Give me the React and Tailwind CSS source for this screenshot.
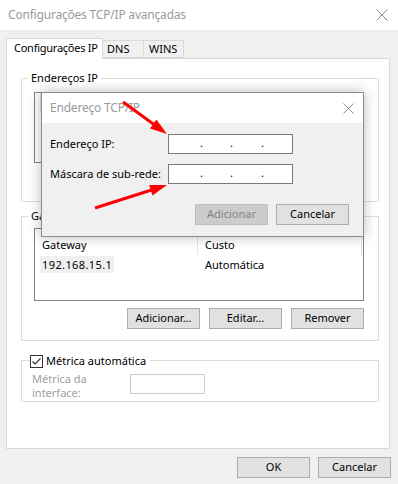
import React from "react";

const F = { fontFamily: '"Noto Sans", "Liberation Sans", sans-serif' };

function Btn({ children, className = "", disabled = false }) {
  return (
    <div
      className={
        "flex items-center justify-center h-[21px] w-[73px] border text-[11px] whitespace-nowrap " +
        (disabled
          ? "bg-[#cccccc] border-[#bfbfbf] text-[#838383] "
          : "bg-[#e1e1e1] border-[#adadad] text-black ") +
        className
      }
    >
      {children}
    </div>
  );
}

function IpBox() {
  return (
    <div className="relative shrink-0 w-[125px] h-[20px] border border-[#7a7a7a] bg-white">
      <span className="absolute left-[31px] top-[1px] text-[11px] leading-[14px]">.</span>
      <span className="absolute left-[61px] top-[1px] text-[11px] leading-[14px]">.</span>
      <span className="absolute left-[92px] top-[1px] text-[11px] leading-[14px]">.</span>
    </div>
  );
}

export default function App() {
  return (
    <div style={F} className="relative w-[398px] h-[484px] bg-[#f0f0f0] text-black text-[11px] whitespace-nowrap overflow-hidden">
      {/* title bar */}
      <div className="h-[30px] bg-white flex items-center justify-between pl-[8px] pr-[10px]">
        <span className="text-[12px] tracking-[-0.2px] text-[#9a9a9a]">Configurações TCP/IP avançadas</span>
        <svg width="12" height="12" viewBox="0 0 12 12">
          <path d="M0.5 0.5 L11.5 11.5 M11.5 0.5 L0.5 11.5" stroke="#8a8a8a" strokeWidth="1" />
        </svg>
      </div>

      {/* tabs */}
      <div className="flex items-end pl-[6px] pt-[7px] h-[28px]">
        <div className="relative z-10 h-[21px] w-[97px] bg-white border border-b-0 border-[#d9d9d9] flex items-center pl-[7px] pb-[2px] -mb-[1px] tracking-[-0.25px]">
          Configurações IP
        </div>
        <div className="h-[18px] w-[41px] bg-[#f0f0f0] border border-l-0 border-[#d9d9d9] pl-[4px] flex items-center">DNS</div>
        <div className="h-[18px] w-[40px] bg-[#f0f0f0] border border-l-0 border-[#d9d9d9] pl-[5px] flex items-center">WINS</div>
      </div>

      {/* panel */}
      <div className="ml-[6px] w-[384px] h-[391px] bg-white border border-[#d9d9d9] pt-[19px] pl-[14px]">
        {/* group 1 */}
        <div className="relative w-[358px] h-[124px] border border-[#dcdcdc] pt-[13px] pl-[12px]">
          <span className="absolute left-[6px] -top-[9px] bg-white px-[3px] leading-[16px]">Endereços IP</span>
          <div className="w-[330px] h-[71px] border border-[#828282] bg-white flex">
            <div className="w-[6px] h-[18px] border-r border-[#e5e5e5]"></div>
          </div>
          <div className="flex justify-end gap-[9px] w-[330px] mt-[7px]">
            <Btn>Adicionar...</Btn>
            <Btn>Editar...</Btn>
            <Btn>Remover</Btn>
          </div>
        </div>

        {/* group 2 */}
        <div className="relative mt-[14px] w-[358px] h-[125px] border border-[#dcdcdc] pt-[11px] pl-[12px]">
          <span className="absolute left-[6px] -top-[9px] bg-white px-[3px] leading-[16px]">Gateways padrão:</span>
          <div className="w-[330px] h-[73px] border border-[#828282] bg-white">
            <div className="flex h-[27px] items-end pb-[1px]">
              <div className="w-[163px] pl-[7px] h-[18px] border-r border-[#e5e5e5] leading-[16px]">Gateway</div>
              <div className="w-[164px] pl-[7px] h-[18px] border-r border-[#e5e5e5] leading-[16px]">Custo</div>
            </div>
            <div className="flex items-center h-[17px]">
              <div className="w-[164px] pl-[5px]">
                <span className="inline-block bg-[#f0f0f0] w-[74px] h-[17px] pl-[2px] leading-[17px] tracking-[0.4px]">192.168.15.1</span>
              </div>
              <div className="pl-[6px] leading-[17px]">Automática</div>
            </div>
          </div>
          <div className="flex justify-end gap-[9px] w-[330px] mt-[7px]">
            <Btn>Adicionar...</Btn>
            <Btn>Editar...</Btn>
            <Btn>Remover</Btn>
          </div>
        </div>

        {/* group 3 */}
        <div className="relative mt-[19px] w-[358px] h-[42px] border border-[#dcdcdc] pl-[10px] pt-[11px] flex items-start">
          <div className="absolute left-[8px] -top-[7px] bg-white pr-[4px] flex items-center gap-[3px] leading-[14px]">
            <div className="w-[13px] h-[13px] border border-[#333333] bg-white flex items-center justify-center">
              <svg width="11" height="11" viewBox="0 0 11 11">
                <path d="M1.5 5.5 L4 8 L9.5 2.5" stroke="#333" strokeWidth="1.2" fill="none" />
              </svg>
            </div>
            <span>Métrica automática</span>
          </div>
          <div className="text-[#a0a0a0] leading-[14px] w-[98px]">
            Métrica da<br />interface:
          </div>
          <div className="w-[75px] h-[20px] border border-[#cccccc] bg-white mt-[2px]"></div>
        </div>
      </div>

      {/* bottom buttons */}
      <div className="flex justify-end gap-[8px] pr-[7px] mt-[8px]">
        <Btn>OK</Btn>
        <Btn>Cancelar</Btn>
      </div>

      {/* dialog */}
      <div className="absolute left-[41px] top-[92px] w-[323px] h-[145px] border border-[#8c8c8c] bg-[#f0f0f0] shadow-[0_0_12px_rgba(0,0,0,0.28)]">
        <div className="h-[30px] bg-white flex items-center justify-between pl-[8px] pr-[9px]">
          <span className="text-[12px] tracking-[-0.2px] text-[#9a9a9a]">Endereço TCP/IP</span>
          <svg width="11" height="11" viewBox="0 0 11 11">
            <path d="M0.5 0.5 L10.5 10.5 M10.5 0.5 L0.5 10.5" stroke="#8a8a8a" strokeWidth="1" />
          </svg>
        </div>
        <div className="pl-[8px] pt-[11px]">
          <div className="flex items-center h-[20px]">
            <span className="w-[118px] shrink-0">Endereço IP:</span>
            <IpBox />
          </div>
          <div className="flex items-center h-[20px] mt-[10px]">
            <span className="w-[118px] shrink-0">Máscara de sub-rede:</span>
            <IpBox />
          </div>
          <div className="flex justify-end gap-[8px] w-[299px] mt-[20px]">
            <Btn disabled>Adicionar</Btn>
            <Btn>Cancelar</Btn>
          </div>
        </div>
      </div>

      {/* red arrows */}
      <svg className="absolute left-0 top-0 pointer-events-none" width="398" height="484">
        <line x1="123" y1="102" x2="154" y2="124.5" stroke="#ff0000" strokeWidth="3" />
        <polygon points="167,134 150,128.5 156.4,119.5" fill="#ff0000" />
        <line x1="95" y1="208" x2="151.5" y2="190" stroke="#ff0000" strokeWidth="3" />
        <polygon points="167,185 152.5,195.4 149.1,185" fill="#ff0000" />
      </svg>
    </div>
  );
}
